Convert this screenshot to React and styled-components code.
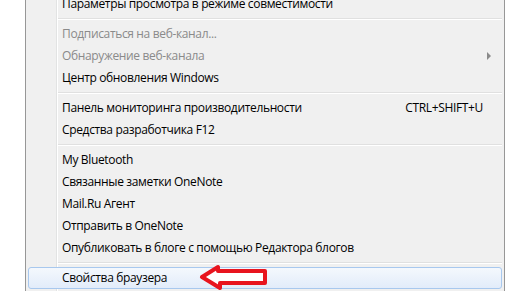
import React from "react";
import styled, { createGlobalStyle } from "styled-components";

const Global = createGlobalStyle`
  html, body { margin: 0; padding: 0; background: #ffffff; overflow: hidden; }
  body { font-family: "Segoe UI", "Open Sans", "Noto Sans", sans-serif; }
`;

const Page = styled.div`
  width: 512px;
  height: 291px;
  overflow: hidden;
  background: #ffffff;
`;

const Menu = styled.div`
  position: relative;
  box-sizing: border-box;
  width: 480px;
  margin: -10px 0 0 25px;
  padding: 2px;
  border: 1px solid #979797;
  background: linear-gradient(
    to right,
    #f0f0f0 0,
    #f0f0f0 30px,
    #e2e3e3 30px,
    #e2e3e3 31px,
    #ffffff 31px,
    #ffffff 32px,
    #f0f0f0 32px
  );
  font-family: "Open Sans", "Noto Sans", sans-serif;
  font-size: 12px;
`;

const Item = styled.div`
  box-sizing: border-box;
  height: 22px;
  display: grid;
  grid-template-columns: 1fr auto 18px;
  align-items: center;
  padding-left: 33px;
  border: 1px solid ${(p) => (p.$active ? "#a8c8ee" : "transparent")};
  border-radius: 3px;
  background: ${(p) =>
    p.$active ? "linear-gradient(to bottom, #f4f8fd, #e2ecfa)" : "transparent"};
  color: ${(p) => (p.$disabled ? "#8a8a8a" : "#000000")};
  white-space: nowrap;
  letter-spacing: -0.35px;
`;

const Label = styled.span`
  line-height: 20px;
`;

const Shortcut = styled.span`
  line-height: 20px;
`;

const SubArrow = styled.span`
  justify-self: start;
  margin-left: 4px;
  width: 0;
  height: 0;
  border-top: 4px solid transparent;
  border-bottom: 4px solid transparent;
  border-left: 4px solid #8a8a8a;
`;

const Separator = styled.div`
  height: 8px;
  display: flex;
  flex-direction: column;
  justify-content: center;
  margin-left: 30px;
  &::before {
    content: "";
    display: block;
    height: 1px;
    background: #e0e0e0;
  }
  &::after {
    content: "";
    display: block;
    height: 1px;
    background: #ffffff;
  }
`;

const Pointer = styled.svg`
  position: absolute;
  left: 173px;
  bottom: -1px;
  pointer-events: none;
`;

function RedArrow() {
  return (
    <Pointer width="72" height="28" viewBox="0 0 72 28">
      <path
        d="M3 13 L19 3 L19 7 L66 7 L66 19 L21 19 L21 24 Z"
        fill="#ffffff"
        stroke="#e8141e"
        strokeWidth="4"
        strokeLinejoin="round"
      />
    </Pointer>
  );
}

const groups = [
  [{ label: "Параметры просмотра в режиме совместимости" }],
  [
    { label: "Подписаться на веб-канал...", disabled: true },
    { label: "Обнаружение веб-канала", disabled: true, sub: true },
    { label: "Центр обновления Windows" },
  ],
  [
    { label: "Панель мониторинга производительности", shortcut: "CTRL+SHIFT+U" },
    { label: "Средства разработчика F12" },
  ],
  [
    { label: "My Bluetooth" },
    { label: "Связанные заметки OneNote" },
    { label: "Mail.Ru Агент" },
    { label: "Отправить в OneNote" },
    { label: "Опубликовать в блоге с помощью Редактора блогов" },
  ],
  [{ label: "Свойства браузера", active: true }],
];

export default function App() {
  return (
    <Page>
      <Global />
      <Menu>
        {groups.map((g, gi) => (
          <React.Fragment key={gi}>
            {gi > 0 && <Separator />}
            {g.map((it) => (
              <Item key={it.label} $disabled={it.disabled} $active={it.active}>
                <Label>{it.label}</Label>
                <Shortcut>{it.shortcut || ""}</Shortcut>
                {it.sub ? <SubArrow /> : <span />}
              </Item>
            ))}
          </React.Fragment>
        ))}
        <RedArrow />
      </Menu>
    </Page>
  );
}
